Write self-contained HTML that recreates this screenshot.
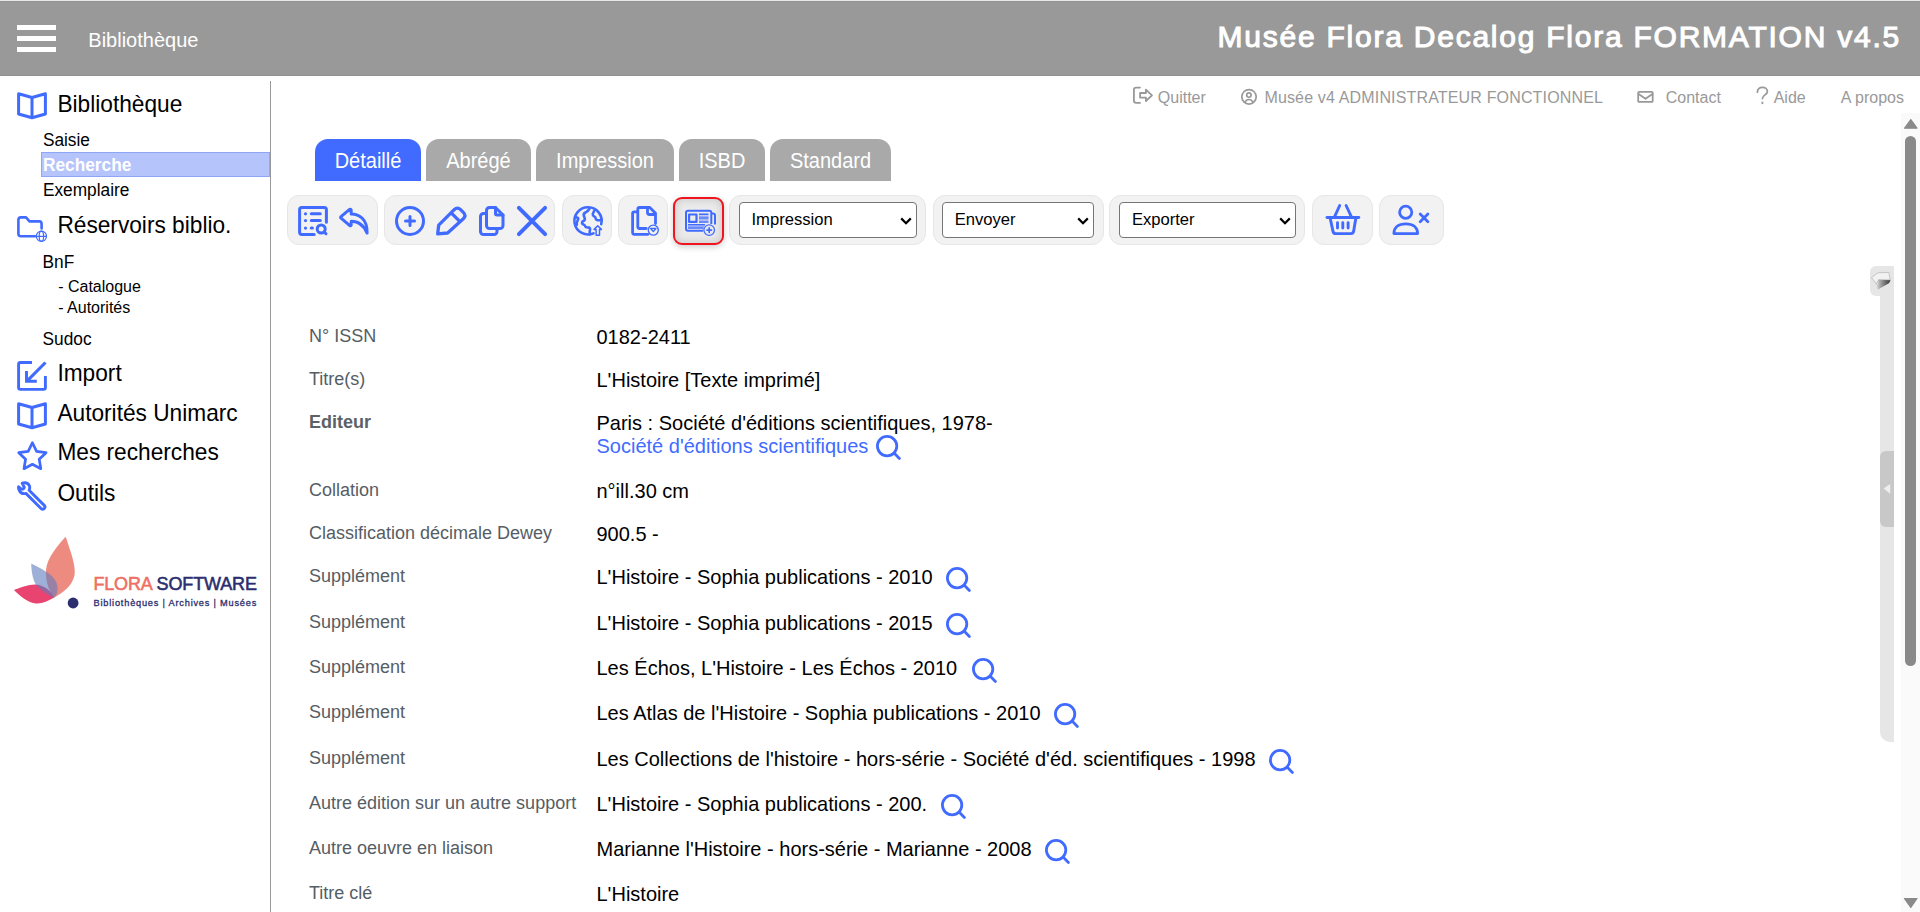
<!DOCTYPE html>
<html><head><meta charset="utf-8"><title>Flora</title>
<style>
html,body{margin:0;padding:0;background:#fff;width:1920px;height:912px;overflow:hidden;position:relative;font-family:"Liberation Sans", sans-serif;}
.t{position:absolute;white-space:nowrap;}
.tab{position:absolute;border-radius:13px 13px 0 0;color:#fff;font-size:20px;text-align:center;line-height:42px;}
.tab span{position:relative;top:-0.6px;display:inline-block;line-height:20px;vertical-align:middle;transform:scaleY(1.07);transform-origin:0 17px}
.grp{position:absolute;top:195.25px;height:49.4px;box-sizing:border-box;background:#f2f2f2;border:1px solid #e6e6e6;border-radius:12px;}
.sel{position:absolute;top:202px;height:36px;box-sizing:border-box;background:#fff;border:1px solid #767676;border-radius:4px;font-size:16.6px;}
.sel span{position:absolute;left:11.5px;top:8.3px;line-height:18px;}
</style></head><body>
<div style="position:absolute;left:0px;top:0px;width:1920px;height:1px;background:#e9eae7"></div>
<div style="position:absolute;left:0px;top:1px;width:1920px;height:75px;background:#999"></div>
<div style="position:absolute;left:0px;top:1px;width:1920px;height:1px;background:#939393"></div>
<div style="position:absolute;left:0px;top:75px;width:1920px;height:1px;background:#919191"></div>
<div style="position:absolute;left:17px;top:25px;width:39px;height:5px;background:#fff"></div>
<div style="position:absolute;left:17px;top:36px;width:39px;height:5px;background:#fff"></div>
<div style="position:absolute;left:17px;top:47px;width:39px;height:5px;background:#fff"></div>
<div class="t" style="left:88.30px;top:29.97px;font-size:20px;line-height:20px;color:#fff;font-weight:normal;transform:scaleY(1.04);transform-origin:0 16.93px;">Bibliothèque</div>
<div class="t" style="left:1217.60px;top:21.71px;font-size:30px;line-height:30px;color:#fff;font-weight:normal;letter-spacing:1.76px;-webkit-text-stroke:1.05px #fff">Musée Flora Decalog Flora FORMATION v4.5</div>
<svg style="position:absolute;left:1128px;top:84px;" width="30" height="24" viewBox="0 0 30 24" fill="none" stroke-linecap="round" stroke-linejoin="round"><g stroke="#999" stroke-width="1.8"><path d="M12 3.55H8.2Q5.9 3.55 5.9 5.9V16.6Q5.9 18.9 8.2 18.9H12"/><path d="M12.1 9V13.6H17.9V17L24 11.3L17.9 5.6V9Z"/></g></svg>
<div class="t" style="left:1157.80px;top:89.66px;font-size:16px;line-height:16px;color:#999;font-weight:normal;">Quitter</div>
<svg style="position:absolute;left:1236px;top:84px;" width="26" height="24" viewBox="0 0 26 24" fill="none" stroke-linecap="round" stroke-linejoin="round"><g stroke="#999" stroke-width="1.7"><circle cx="13" cy="12.85" r="7.2"/><circle cx="12.9" cy="11.05" r="2.2"/><path d="M8.9 18.4C9.8 16.4 11.2 15.5 12.9 15.5S16.1 16.4 17.1 18.4"/></g></svg>
<div class="t" style="left:1264.40px;top:89.66px;font-size:16px;line-height:16px;color:#999;font-weight:normal;letter-spacing:0.16px">Musée v4 ADMINISTRATEUR FONCTIONNEL</div>
<svg style="position:absolute;left:1632px;top:84px;" width="30" height="24" viewBox="0 0 30 24" fill="none" stroke-linecap="round" stroke-linejoin="round"><g stroke="#999" stroke-width="1.8"><rect x="6.2" y="7.9" width="14.5" height="10" rx="1"/><path d="M6.6 9.9L13.5 14.8L20.4 9.9"/></g></svg>
<div class="t" style="left:1665.70px;top:89.66px;font-size:16px;line-height:16px;color:#999;font-weight:normal;">Contact</div>
<svg style="position:absolute;left:1750px;top:84px;" width="26" height="24" viewBox="0 0 26 24" fill="none" stroke-linecap="round" stroke-linejoin="round"><g stroke="#999" stroke-width="1.8"><path d="M7.4 8.2C7.4 5 9.5 3.3 12.5 3.3C15.5 3.3 17.4 5.2 17.4 7.6C17.4 10.8 12.4 11 12.4 14.5"/><path d="M12.4 18.6V19.2" stroke-linecap="square"/></g></svg>
<div class="t" style="left:1773.70px;top:89.66px;font-size:16px;line-height:16px;color:#999;font-weight:normal;">Aide</div>
<div class="t" style="left:1840.80px;top:89.66px;font-size:16px;line-height:16px;color:#999;font-weight:normal;">A propos</div>
<div style="position:absolute;left:270px;top:81px;width:1px;height:831px;background:#999"></div>
<svg style="position:absolute;left:12px;top:88px;" width="40" height="36" viewBox="0 0 40 36" fill="none" stroke-linecap="round" stroke-linejoin="round"><path stroke="#416BFF" stroke-width="3" d="M6.6 5.8L20 9.5L33.4 5.8V26L20 29.7L6.6 26Z M20 9.5V29.7"/></svg>
<div class="t" style="left:57.40px;top:93.28px;font-size:22.7px;line-height:22.7px;color:#000;font-weight:normal;transform:scaleY(1.04);transform-origin:0 19.22px;">Bibliothèque</div>
<div class="t" style="left:42.90px;top:131.56px;font-size:17.3px;line-height:17.3px;color:#000;font-weight:normal;transform:scaleY(1.06);transform-origin:0 14.64px;">Saisie</div>
<div style="position:absolute;left:41px;top:152px;width:229px;height:25px;background:#b5c4fa;box-sizing:border-box;border:1px solid #8fa6f8"></div>
<div class="t" style="left:43.00px;top:156.56px;font-size:17.3px;line-height:17.3px;color:#fff;font-weight:bold;transform:scaleY(1.06);transform-origin:0 14.64px;">Recherche</div>
<div class="t" style="left:42.90px;top:181.56px;font-size:17.3px;line-height:17.3px;color:#000;font-weight:normal;transform:scaleY(1.06);transform-origin:0 14.64px;">Exemplaire</div>
<svg style="position:absolute;left:12px;top:210px;" width="40" height="36" viewBox="0 0 40 36" fill="none" stroke-linecap="round" stroke-linejoin="round"><path stroke="#416BFF" stroke-width="2.6" d="M23 26.3H8.9Q6.4 26.3 6.4 23.8V9.9Q6.4 7.4 8.9 7.4H14L17.5 11.4H27.3Q29.6 11.4 29.6 13.9V18.5"/><g stroke="#416BFF" stroke-width="1.2"><circle cx="29.4" cy="26.3" r="5.1"/><ellipse cx="29.4" cy="26.3" rx="2.2" ry="5.1"/><path d="M24.5 26.3H34.3"/></g></svg>
<div class="t" style="left:57.40px;top:214.48px;font-size:22.7px;line-height:22.7px;color:#000;font-weight:normal;transform:scaleY(1.04);transform-origin:0 19.22px;">Réservoirs biblio.</div>
<div class="t" style="left:42.60px;top:254.06px;font-size:17.3px;line-height:17.3px;color:#000;font-weight:normal;transform:scaleY(1.06);transform-origin:0 14.64px;">BnF</div>
<div class="t" style="left:58.20px;top:279.06px;font-size:16px;line-height:16px;color:#000;font-weight:normal;">- Catalogue</div>
<div class="t" style="left:58.20px;top:299.86px;font-size:16px;line-height:16px;color:#000;font-weight:normal;">- Autorités</div>
<div class="t" style="left:42.60px;top:331.06px;font-size:17.3px;line-height:17.3px;color:#000;font-weight:normal;transform:scaleY(1.06);transform-origin:0 14.64px;">Sudoc</div>
<svg style="position:absolute;left:12px;top:356px;" width="40" height="40" viewBox="0 0 40 40" fill="none" stroke-linecap="round" stroke-linejoin="round"><g stroke="#416BFF" stroke-width="2.9" stroke-linecap="butt" stroke-linejoin="miter"><path d="M20 6.5H8.4Q6.6 6.5 6.6 8.3V31.6Q6.6 33.4 8.4 33.4H31.6Q33.4 33.4 33.4 31.6V20"/><path d="M14.5 15.1V25.3H24.8"/><path d="M33.5 6.5L15.2 24.8" stroke-width="3.1"/></g></svg>
<div class="t" style="left:57.40px;top:362.28px;font-size:22.7px;line-height:22.7px;color:#000;font-weight:normal;transform:scaleY(1.04);transform-origin:0 19.22px;">Import</div>
<svg style="position:absolute;left:12px;top:398px;" width="40" height="36" viewBox="0 0 40 36" fill="none" stroke-linecap="round" stroke-linejoin="round"><path stroke="#416BFF" stroke-width="3" d="M6.6 5.8L20 9.5L33.4 5.8V26L20 29.7L6.6 26Z M20 9.5V29.7"/></svg>
<div class="t" style="left:57.40px;top:402.38px;font-size:22.7px;line-height:22.7px;color:#000;font-weight:normal;transform:scaleY(1.04);transform-origin:0 19.22px;">Autorités Unimarc</div>
<svg style="position:absolute;left:15.6px;top:440.4px;" width="32.8" height="32.8" viewBox="0 0 24 24" fill="none" stroke-linecap="round" stroke-linejoin="round"><path stroke="#416BFF" stroke-width="2" d="M12 17.75l-6.172 3.245l1.179 -6.873l-5 -4.867l6.9 -1l3.086 -6.253l3.086 6.253l6.9 1l-5 4.867l1.179 6.873z"/></svg>
<div class="t" style="left:57.40px;top:441.48px;font-size:22.7px;line-height:22.7px;color:#000;font-weight:normal;transform:scaleY(1.04);transform-origin:0 19.22px;">Mes recherches</div>
<svg style="position:absolute;left:12px;top:476px;" width="40" height="40" viewBox="0 0 40 40" fill="none" stroke-linecap="round" stroke-linejoin="round"><path stroke="#416BFF" stroke-width="2.9" d="M10.2 7.2Q15.5 5.8 17.3 9.6Q18.3 12 17.1 14.3L32.5 29.6A2.3 2.3 0 0 1 29.3 32.8L13.9 17.4Q9.3 18.5 7.3 14.5Q6.3 12.5 6.6 10.8L9.3 13Q11.8 13.6 12.3 11.3Z"/></svg>
<div class="t" style="left:57.40px;top:481.58px;font-size:22.7px;line-height:22.7px;color:#000;font-weight:normal;transform:scaleY(1.04);transform-origin:0 19.22px;">Outils</div>
<svg style="position:absolute;left:0px;top:525px;" width="90" height="90" viewBox="0 0 90 90" fill="none" stroke-linecap="round" stroke-linejoin="round"><path fill="#ee8b80" d="M65.7 11.8C58 20 47 33 46 45C45.4 58 50 68 54.3 72.5C62 68 72 62 74.6 50C76 40 70 25 65.7 11.8Z"/>
<path fill="#e8446f" d="M13.9 65.1C22 62 30 59 36 59.5C45 60.5 52 67 54.3 72.5C48 76 42 79 36 78.5C28 78 20 71 13.9 65.1Z"/>
<path fill="#5f7bbe" fill-opacity="0.6" d="M31.2 38.5C31.5 48 33 56 37 61C44 68 50 71 54.3 72.5C57 70 58 66 57.3 61C56 52 48 47 31.2 38.5Z"/>
<circle cx="73.1" cy="78" r="5.4" fill="#2b2d6e"/></svg>
<div class="t" style="left:93.40px;top:574.56px;font-size:18px;line-height:18px;color:#2b2d6e;font-weight:normal;letter-spacing:-0.14px;-webkit-text-stroke:0.55px currentColor"><span style="color:#ee7064">FLORA</span> SOFTWARE</div>
<div class="t" style="left:93.60px;top:598.61px;font-size:9.2px;line-height:9.2px;color:#2b2d6e;font-weight:normal;letter-spacing:0.8px;-webkit-text-stroke:0.3px #2b2d6e">Bibliothèques | Archives | Musées</div>
<div class="tab" style="left:315px;top:139px;width:106px;height:42px;background:#416BFF"><span>Détaillé</span></div>
<div class="tab" style="left:426px;top:139px;width:105px;height:42px;background:#a9a9a9"><span>Abrégé</span></div>
<div class="tab" style="left:536px;top:139px;width:138px;height:42px;background:#a9a9a9"><span>Impression</span></div>
<div class="tab" style="left:679px;top:139px;width:86px;height:42px;background:#a9a9a9"><span>ISBD</span></div>
<div class="tab" style="left:770px;top:139px;width:121px;height:42px;background:#a9a9a9"><span>Standard</span></div>
<div class="grp" style="left:287.25px;width:90.50px"></div>
<div class="grp" style="left:384.10px;width:171.15px"></div>
<div class="grp" style="left:562.25px;width:49.25px"></div>
<div class="grp" style="left:618.00px;width:49.50px"></div>
<div class="grp" style="left:729.40px;width:196.20px"></div>
<div class="grp" style="left:932.50px;width:171.00px"></div>
<div class="grp" style="left:1109.40px;width:196.00px"></div>
<div class="grp" style="left:1312.25px;width:60.25px"></div>
<div class="grp" style="left:1379.40px;width:64.35px"></div>
<div style="position:absolute;left:672.5px;top:196.5px;width:51.25px;height:48.5px;box-sizing:border-box;border:2px solid #f0141e;border-radius:9px;background:#ebebeb;box-shadow:inset 0 0 7px 2px #cfcfcf, 0 2px 6px rgba(0,0,0,0.2)"></div>
<svg style="position:absolute;left:294px;top:202px;" width="40" height="40" viewBox="0 0 40 40" fill="none" stroke-linecap="round" stroke-linejoin="round"><g stroke="#416BFF" stroke-width="3"><path d="M20.2 32.4H7.8Q5.6 32.4 5.6 30.2V7.8Q5.6 5.6 7.8 5.6H30.2Q32.4 5.6 32.4 7.8V20.2"/><path d="M17.3 11.8H26.3M17.3 18.6H26.3M17.3 26.1H18.4"/><circle cx="27.2" cy="27" r="4"/><path d="M30.2 30L32 31.8"/></g><g fill="#416BFF"><circle cx="11.5" cy="11.8" r="1.6"/><circle cx="11.5" cy="18.6" r="1.6"/><circle cx="11.5" cy="26.1" r="1.6"/></g></svg>
<svg style="position:absolute;left:334px;top:202px;" width="40" height="40" viewBox="0 0 40 40" fill="none" stroke-linecap="round" stroke-linejoin="round"><path stroke="#416BFF" stroke-width="3" d="M15.6 7.4Q17 6.9 17.2 8.2V11.9C25 11.9 33.6 17 33.1 31.1C30.5 24.8 25.5 19.2 17.2 19.2V22.8Q17 24.2 15.8 23.6L7 16.2Q6.2 15.4 7 14.6Z"/></svg>
<svg style="position:absolute;left:392px;top:203px;" width="36" height="36" viewBox="0 0 24 24" fill="none" stroke-linecap="round" stroke-linejoin="round"><g stroke="#416BFF" stroke-width="2"><circle cx="12" cy="12" r="9"/><path d="M9 12h6M12 9v6"/></g></svg>
<svg style="position:absolute;left:430px;top:202px;" width="40" height="40" viewBox="0 0 40 40" fill="none" stroke-linecap="round" stroke-linejoin="round"><path stroke="#416BFF" stroke-width="3.3" d="M7.7 31.8L8.7 23.2L24.2 7.7Q27.4 4.5 30.6 7.7L33.3 10.4Q36.5 13.6 33.3 16.8L17.6 31Z M21.2 10.9L29.2 18.9"/></svg>
<svg style="position:absolute;left:473.2px;top:203.2px;" width="36" height="36" viewBox="0 0 24 24" fill="none" stroke-linecap="round" stroke-linejoin="round"><g stroke="#416BFF" stroke-width="2"><path d="M15 3v4a1 1 0 0 0 1 1h4"/><path d="M18 17h-7a2 2 0 0 1 -2 -2v-10a2 2 0 0 1 2 -2h4l5 5v7a2 2 0 0 1 -2 2z"/><path d="M16 17v2a2 2 0 0 1 -2 2h-7a2 2 0 0 1 -2 -2v-10a2 2 0 0 1 2 -2h2"/></g></svg>
<svg style="position:absolute;left:512px;top:201px;" width="40" height="40" viewBox="0 0 40 40" fill="none" stroke-linecap="round" stroke-linejoin="round"><path stroke="#416BFF" stroke-width="4" d="M6.9 6.9L33.1 33.1M33.1 6.9L6.9 33.1"/></svg>
<svg style="position:absolute;left:568px;top:202px;" width="40" height="40" viewBox="0 0 40 40" fill="none" stroke-linecap="round" stroke-linejoin="round"><g stroke="#416BFF" stroke-width="2.6"><path d="M25.53 31.32A13.6 13.6 0 1 1 33.2 22.19"/><path d="M21.5 6.6C20.5 8.5 19 9.6 17.5 10.5C15.5 11.5 15.3 13 16.2 14.8C17 16.5 17.3 18 15.8 18.8C13.8 19.5 13.5 21 14.8 22.2C16.2 23 17.5 23.2 17.2 24.5C17.5 25.6 19 25.4 21.2 25.6C22.6 26.5 22.2 27.8 21.8 29C21.5 30.3 21.8 31.5 21.9 32.3"/><path d="M26.3 8.8C25.5 10.5 24 12 25 13.5C26 14.6 27.5 14.5 27.6 16.2C27.6 17.6 29 18.4 31.6 18.3C32.8 18.2 33.6 17.8 33.8 17.5"/><path d="M7.9 15.4C9.5 15.4 10.6 16 10.2 17.2C9.5 18.5 8.8 19.5 8.8 20.8V22.8"/></g><path stroke="#416BFF" stroke-width="1.5" d="M26.1 27.4L29.7 23.8L33.4 27.4H31.5V33.2H28.1V27.4Z"/></svg>
<svg style="position:absolute;left:623px;top:202px;" width="40" height="40" viewBox="0 0 40 40" fill="none" stroke-linecap="round" stroke-linejoin="round"><g stroke="#416BFF" stroke-width="2.8"><path d="M24.5 5.5V10.5Q24.5 12.5 26.5 12.5H31.5"/><path d="M23.2 26.5H16.5Q14.8 26.5 14.8 24.8V7.2Q14.8 5.5 16.5 5.5H26.8L32.5 11.2V21.5"/><path d="M25 32.3H11.2Q9.6 32.3 9.6 30.6V11.5Q9.6 9.8 11.2 9.8H14"/></g><circle cx="30.3" cy="28.1" r="5" stroke="#416BFF" stroke-width="1.4" fill="#f2f2f2"/><path d="M27.6 26.5H33L30.3 29.6Z" stroke="#416BFF" stroke-width="1.3"/></svg>
<svg style="position:absolute;left:678px;top:202px;" width="40" height="40" viewBox="0 0 40 40" fill="none" stroke-linecap="round" stroke-linejoin="round"><g stroke="#416BFF" stroke-width="2" stroke-linecap="butt"><path d="M25 28.8H10Q8 28.8 8 26.8V10.7Q8 8.7 10 8.7H31.3Q33.3 8.7 33.3 10.7V22"/><path d="M33.3 11.5H35Q37 11.5 37 13.5V22.5"/><rect x="11.1" y="12.5" width="7.4" height="7.4" stroke-width="2.2"/><path d="M21 12.2H30.5M21 16.1H30.5M21 20H30.5M10 22.8H27M10 26H25.5" stroke-width="1.5"/><path d="M21 14.15H30.5M21 18.05H30.5M10 24.4H26" stroke-width="1.5" stroke-opacity="0.5"/></g><circle cx="31.2" cy="28.1" r="5.3" stroke="#416BFF" stroke-width="1.3" fill="#e9e9e9"/><path d="M29 28.1H33.4M31.2 25.9V30.3" stroke="#416BFF" stroke-width="1.7"/></svg>
<svg style="position:absolute;left:1320px;top:200px;" width="46" height="40" viewBox="0 0 46 40" fill="none" stroke-linecap="round" stroke-linejoin="round"><g stroke="#416BFF" stroke-width="2.9"><path d="M7 17.5H38.8"/><path d="M10.1 17.8L13 31.4Q13.5 33.6 15.6 33.6H31Q33.1 33.6 33.6 31.4L35.9 17.8"/><path d="M14.5 16.8L19.7 5.5M26.1 5.5L31.4 16.8"/><path d="M17.5 22.8V28.1M22.8 22.8V28.1M28.1 22.8V28.1"/></g></svg>
<svg style="position:absolute;left:1386px;top:200px;" width="50" height="40" viewBox="0 0 50 40" fill="none" stroke-linecap="round" stroke-linejoin="round"><g stroke="#416BFF" stroke-width="2.8"><circle cx="19.7" cy="12.3" r="6.1"/><path d="M7.9 33.6C7.9 27.5 12.5 23.9 19.75 23.9C27 23.9 31.6 27.5 31.6 33.6Z"/><path d="M34.2 14L41.9 21.7M41.9 14L34.2 21.7"/></g></svg>
<div class="sel" style="left:739.00px;width:178.00px"><span>Impression</span><svg width="12" height="8" viewBox="0 0 12 8" style="position:absolute;right:4.2px;top:13.6px"><path d="M1.2 1.4L6 6.2L10.8 1.4" stroke="#000" stroke-width="2.2" fill="none"/></svg></div>
<div class="sel" style="left:942.25px;width:151.50px"><span>Envoyer</span><svg width="12" height="8" viewBox="0 0 12 8" style="position:absolute;right:4.2px;top:13.6px"><path d="M1.2 1.4L6 6.2L10.8 1.4" stroke="#000" stroke-width="2.2" fill="none"/></svg></div>
<div class="sel" style="left:1119.40px;width:177.10px"><span>Exporter</span><svg width="12" height="8" viewBox="0 0 12 8" style="position:absolute;right:4.2px;top:13.6px"><path d="M1.2 1.4L6 6.2L10.8 1.4" stroke="#000" stroke-width="2.2" fill="none"/></svg></div>
<div class="t" style="left:309.00px;top:326.66px;font-size:18px;line-height:18px;color:#565d64;font-weight:normal;">N° ISSN</div>
<div class="t" style="left:596.50px;top:326.77px;font-size:20px;line-height:20px;color:#000;font-weight:normal;transform:scaleY(1.04);transform-origin:0 16.93px;">0182-2411</div>
<div class="t" style="left:309.00px;top:370.36px;font-size:18px;line-height:18px;color:#565d64;font-weight:normal;">Titre(s)</div>
<div class="t" style="left:596.50px;top:370.47px;font-size:20px;line-height:20px;color:#000;font-weight:normal;transform:scaleY(1.04);transform-origin:0 16.93px;">L'Histoire [Texte imprimé]</div>
<div class="t" style="left:309.00px;top:413.06px;font-size:18px;line-height:18px;color:#5c6166;font-weight:bold;">Editeur</div>
<div class="t" style="left:596.50px;top:413.17px;font-size:20px;line-height:20px;color:#000;font-weight:normal;transform:scaleY(1.04);transform-origin:0 16.93px;">Paris : Société d'éditions scientifiques, 1978-</div>
<div class="t" style="left:309.00px;top:480.86px;font-size:18px;line-height:18px;color:#565d64;font-weight:normal;">Collation</div>
<div class="t" style="left:596.50px;top:480.97px;font-size:20px;line-height:20px;color:#000;font-weight:normal;transform:scaleY(1.04);transform-origin:0 16.93px;">n°ill.30 cm</div>
<div class="t" style="left:309.00px;top:523.76px;font-size:18px;line-height:18px;color:#565d64;font-weight:normal;">Classification décimale Dewey</div>
<div class="t" style="left:596.50px;top:523.87px;font-size:20px;line-height:20px;color:#000;font-weight:normal;transform:scaleY(1.04);transform-origin:0 16.93px;">900.5 -</div>
<div class="t" style="left:309.00px;top:566.76px;font-size:18px;line-height:18px;color:#565d64;font-weight:normal;">Supplément</div>
<div class="t" style="left:596.50px;top:566.87px;font-size:20px;line-height:20px;color:#000;font-weight:normal;transform:scaleY(1.04);transform-origin:0 16.93px;">L'Histoire - Sophia publications - 2010</div>
<svg style="position:absolute;left:943.2px;top:563.6999999999999px;" width="32" height="32" viewBox="0 0 32 32" fill="none" stroke-linecap="round" stroke-linejoin="round"><g stroke="#416BFF" stroke-width="2.8"><circle cx="14.1" cy="14.1" r="9.7"/><path d="M21.3 21.3L26.4 26.4"/></g></svg>
<div class="t" style="left:309.00px;top:612.56px;font-size:18px;line-height:18px;color:#565d64;font-weight:normal;">Supplément</div>
<div class="t" style="left:596.50px;top:612.67px;font-size:20px;line-height:20px;color:#000;font-weight:normal;transform:scaleY(1.04);transform-origin:0 16.93px;">L'Histoire - Sophia publications - 2015</div>
<svg style="position:absolute;left:943.2px;top:609.4999999999999px;" width="32" height="32" viewBox="0 0 32 32" fill="none" stroke-linecap="round" stroke-linejoin="round"><g stroke="#416BFF" stroke-width="2.8"><circle cx="14.1" cy="14.1" r="9.7"/><path d="M21.3 21.3L26.4 26.4"/></g></svg>
<div class="t" style="left:309.00px;top:657.56px;font-size:18px;line-height:18px;color:#565d64;font-weight:normal;">Supplément</div>
<div class="t" style="left:596.50px;top:657.67px;font-size:20px;line-height:20px;color:#000;font-weight:normal;transform:scaleY(1.04);transform-origin:0 16.93px;">Les Échos, L'Histoire - Les Échos - 2010</div>
<svg style="position:absolute;left:968.7px;top:654.4999999999999px;" width="32" height="32" viewBox="0 0 32 32" fill="none" stroke-linecap="round" stroke-linejoin="round"><g stroke="#416BFF" stroke-width="2.8"><circle cx="14.1" cy="14.1" r="9.7"/><path d="M21.3 21.3L26.4 26.4"/></g></svg>
<div class="t" style="left:309.00px;top:702.86px;font-size:18px;line-height:18px;color:#565d64;font-weight:normal;">Supplément</div>
<div class="t" style="left:596.50px;top:702.97px;font-size:20px;line-height:20px;color:#000;font-weight:normal;transform:scaleY(1.04);transform-origin:0 16.93px;">Les Atlas de l'Histoire - Sophia publications - 2010</div>
<svg style="position:absolute;left:1050.5px;top:699.8px;" width="32" height="32" viewBox="0 0 32 32" fill="none" stroke-linecap="round" stroke-linejoin="round"><g stroke="#416BFF" stroke-width="2.8"><circle cx="14.1" cy="14.1" r="9.7"/><path d="M21.3 21.3L26.4 26.4"/></g></svg>
<div class="t" style="left:309.00px;top:748.56px;font-size:18px;line-height:18px;color:#565d64;font-weight:normal;">Supplément</div>
<div class="t" style="left:596.50px;top:748.67px;font-size:20px;line-height:20px;color:#000;font-weight:normal;transform:scaleY(1.04);transform-origin:0 16.93px;">Les Collections de l'histoire - hors-série - Société d'éd. scientifiques - 1998</div>
<svg style="position:absolute;left:1266.3px;top:745.4999999999999px;" width="32" height="32" viewBox="0 0 32 32" fill="none" stroke-linecap="round" stroke-linejoin="round"><g stroke="#416BFF" stroke-width="2.8"><circle cx="14.1" cy="14.1" r="9.7"/><path d="M21.3 21.3L26.4 26.4"/></g></svg>
<div class="t" style="left:309.00px;top:794.16px;font-size:18px;line-height:18px;color:#565d64;font-weight:normal;">Autre édition sur un autre support</div>
<div class="t" style="left:596.50px;top:794.27px;font-size:20px;line-height:20px;color:#000;font-weight:normal;transform:scaleY(1.04);transform-origin:0 16.93px;">L'Histoire - Sophia publications - 200.</div>
<svg style="position:absolute;left:937.9px;top:791.0999999999999px;" width="32" height="32" viewBox="0 0 32 32" fill="none" stroke-linecap="round" stroke-linejoin="round"><g stroke="#416BFF" stroke-width="2.8"><circle cx="14.1" cy="14.1" r="9.7"/><path d="M21.3 21.3L26.4 26.4"/></g></svg>
<div class="t" style="left:309.00px;top:838.86px;font-size:18px;line-height:18px;color:#565d64;font-weight:normal;">Autre oeuvre en liaison</div>
<div class="t" style="left:596.50px;top:838.97px;font-size:20px;line-height:20px;color:#000;font-weight:normal;transform:scaleY(1.04);transform-origin:0 16.93px;">Marianne l'Histoire - hors-série - Marianne - 2008</div>
<svg style="position:absolute;left:1041.5px;top:835.8px;" width="32" height="32" viewBox="0 0 32 32" fill="none" stroke-linecap="round" stroke-linejoin="round"><g stroke="#416BFF" stroke-width="2.8"><circle cx="14.1" cy="14.1" r="9.7"/><path d="M21.3 21.3L26.4 26.4"/></g></svg>
<div class="t" style="left:309.00px;top:884.26px;font-size:18px;line-height:18px;color:#565d64;font-weight:normal;">Titre clé</div>
<div class="t" style="left:596.50px;top:884.37px;font-size:20px;line-height:20px;color:#000;font-weight:normal;transform:scaleY(1.04);transform-origin:0 16.93px;">L'Histoire</div>
<div class="t" style="left:596.50px;top:435.87px;font-size:20px;line-height:20px;color:#416BFF;font-weight:normal;transform:scaleY(1.04);transform-origin:0 16.93px;">Société d'éditions scientifiques</div>
<svg style="position:absolute;left:873.2px;top:432px;" width="32" height="32" viewBox="0 0 32 32" fill="none" stroke-linecap="round" stroke-linejoin="round"><g stroke="#416BFF" stroke-width="2.8"><circle cx="14.1" cy="14.1" r="9.7"/><path d="M21.3 21.3L26.4 26.4"/></g></svg>
<div style="position:absolute;left:1880px;top:266px;width:14px;height:476px;background:#e6e6e6;border-bottom-left-radius:10px"></div>
<div style="position:absolute;left:1870px;top:266px;width:24px;height:29.5px;background:#e6e6e6;border-radius:6px 0 0 6px"></div>
<svg style="position:absolute;left:1870px;top:266px;" width="24" height="30" viewBox="0 0 24 30" fill="none" stroke-linecap="round" stroke-linejoin="round"><defs><linearGradient id="g1" x1="0" x2="1"><stop offset="0" stop-color="#bbb"/><stop offset="1" stop-color="#333"/></linearGradient></defs><path d="M1.8 11.4L7.8 6.8L18.9 6.4L20.2 13.8L8.8 13.8L6.8 17.9Z" fill="#f2f2f2" stroke="#b5b5b5" stroke-width="0.7"/><path d="M8.8 13.8L20.6 14.2L18.9 17.3L8.4 23.2Z" fill="url(#g1)"/><path d="M6.8 17.9L8.4 23.2L8.8 13.8Z" fill="#ddd" stroke="#aaa" stroke-width="0.5"/></svg>
<div style="position:absolute;left:1880px;top:451px;width:14px;height:76px;background:#c8c8c8;border-radius:6px 0 0 6px"></div>
<svg style="position:absolute;left:1880px;top:480px;" width="14" height="16" viewBox="0 0 14 16" fill="none" stroke-linecap="round" stroke-linejoin="round"><path d="M3.6 8.5L10.2 3.9V13.7Z" fill="#efefef"/></svg>
<div style="position:absolute;left:1901px;top:113px;width:19px;height:799px;background:#fafafa"></div>
<svg style="position:absolute;left:1901px;top:113px;" width="19" height="20" viewBox="0 0 19 20" fill="none" stroke-linecap="round" stroke-linejoin="round"><path d="M3.6 15.2L9.8 6.6L16 15.2Z" fill="#8a8a8a" stroke="#8a8a8a" stroke-width="1.2" stroke-linejoin="round"/></svg>
<div style="position:absolute;left:1905px;top:136px;width:11px;height:530px;background:#898989;border-radius:5.5px"></div>
<svg style="position:absolute;left:1901px;top:892px;" width="19" height="20" viewBox="0 0 19 20" fill="none" stroke-linecap="round" stroke-linejoin="round"><path d="M3.4 6.5L9.8 15.4L16 6.5Z" fill="#8a8a8a" stroke="#8a8a8a" stroke-width="1.2" stroke-linejoin="round"/></svg>
</body></html>
